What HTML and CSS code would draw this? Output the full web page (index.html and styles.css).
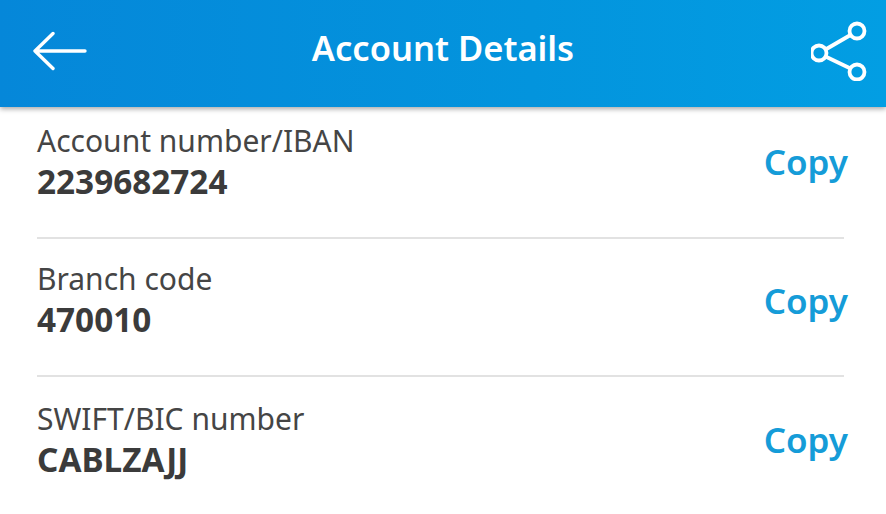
FILE: index.html
```html
<!DOCTYPE html>
<html lang="en">
  <head>
    <meta charset="UTF-8" />
    <meta name="viewport" content="width=device-width, initial-scale=1.0" />
    <title>Account Details</title>
    <link rel="stylesheet" href="styles.css">
  </head>
  <body>
    <header class="topbar">
      <svg class="back-icon" width="54" height="40" viewBox="0 0 54 40" fill="none" stroke="#fff" stroke-width="3.4" stroke-linecap="round" stroke-linejoin="round">
        <path d="M52 20H2M20 2.500L2 20L20 37.500" />
      </svg>
      <h1>Account Details</h1>
      <svg class="share-icon" width="56" height="60" viewBox="0 0 56 60" fill="none" stroke="#fff" stroke-width="3.8">
        <circle cx="46" cy="10" r="7.5" />
        <circle cx="8" cy="32" r="7.5" />
        <circle cx="46" cy="51" r="7.5" />
        <path d="M39.500 14L14.500 28.500M14.500 35.500L39.500 47.500" />
      </svg>
    </header>
    <div class="rows">
      <div class="row">
        <div class="info">
          <p class="label">Account number/IBAN</p>
          <p class="value">2239682724</p>
        </div>
        <a class="copy" href="#">Copy</a>
      </div>
      <div class="row">
        <div class="info">
          <p class="label">Branch code</p>
          <p class="value">470010</p>
        </div>
        <a class="copy" href="#">Copy</a>
      </div>
      <div class="row">
        <div class="info">
          <p class="label">SWIFT/BIC number</p>
          <p class="value">CABLZAJJ</p>
        </div>
        <a class="copy" href="#">Copy</a>
      </div>
    </div>
  </body>
</html>
```

FILE: styles.css
```css
html, body {
  height: 100%;
}
body {
  margin: 0;
  background-color: #fff;
  font-family: "Noto Sans", "Open Sans", sans-serif;
  color: #3b3b3b;
  overflow: hidden;
}
.topbar {
  height: 107px;
  box-sizing: border-box;
  display: flex;
  align-items: center;
  justify-content: space-between;
  padding: 0 19px 5px 33px;
  background: linear-gradient(90deg, #0587d9 0%, #0394dd 60%, #029ee3 100%);
  box-shadow: 0 2px 5px rgba(0, 0, 0, 0.35);
  position: relative;
  z-index: 1;
}
.topbar h1 {
  margin: 0;
  color: #fff;
  font-size: 34.500px;
  font-weight: 600;
  line-height: 40px;
  position: absolute;
  left: 0;
  right: 0;
  top: 28px;
  text-align: center;
}
.back-icon, .share-icon {
  display: block;
}
.rows {
  margin-top: -7px;
  padding: 0 42px 0 37px;
}
.row {
  height: 138.500px;
  box-sizing: border-box;
  padding-bottom: 13px;
  display: flex;
  align-items: center;
  justify-content: space-between;
  border-bottom: 2px solid #e2e2e2;
}
.row:last-child {
  border-bottom: none;
}
.label {
  margin: 0;
  font-size: 30px;
  line-height: 39px;
  color: #454545;
}
.value {
  margin: 0;
  font-size: 33.300px;
  line-height: 43px;
  font-weight: 700;
}
.copy {
  color: #159cd8;
  font-size: 35px;
  font-weight: 600;
  text-decoration: none;
  margin-right: -4px;
}
```
